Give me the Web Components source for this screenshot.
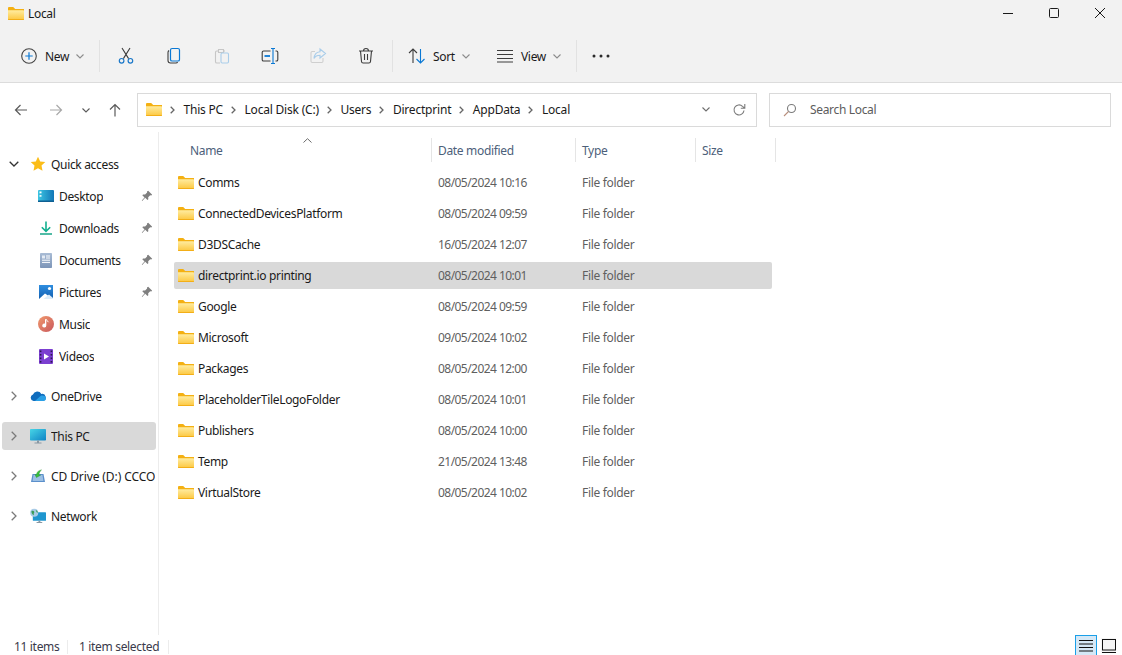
<!DOCTYPE html>
<html lang="en">
<head>
<meta charset="utf-8">
<title>Local</title>
<style>
html, body { margin: 0; height: 100%; background: #fff; overflow: hidden; }
body { font: 12px "Noto Sans", "Open Sans", sans-serif; letter-spacing: -0.33px; color: #1a1a1a; }
</style>
</head>
<body>
<explorer-window>
  <title-bar slot="title" label="Local"></title-bar>
  <tool-bar slot="tools"></tool-bar>
  <address-bar slot="address"></address-bar>
  <nav-pane slot="nav">
    <nav-item chevron="open" icon="star" label="Quick access"></nav-item>
    <nav-item depth="1" icon="desktop" label="Desktop" pin></nav-item>
    <nav-item depth="1" icon="downloads" label="Downloads" pin></nav-item>
    <nav-item depth="1" icon="documents" label="Documents" pin></nav-item>
    <nav-item depth="1" icon="pictures" label="Pictures" pin></nav-item>
    <nav-item depth="1" icon="music" label="Music"></nav-item>
    <nav-item depth="1" icon="videos" label="Videos" last></nav-item>
    <nav-item chevron="closed" icon="onedrive" label="OneDrive" last></nav-item>
    <nav-item chevron="closed" icon="pc" label="This PC" selected last></nav-item>
    <nav-item chevron="closed" icon="cd" label="CD Drive (D:) CCCO" last style="letter-spacing:-0.1px"></nav-item>
    <nav-item chevron="closed" icon="network" label="Network"></nav-item>
  </nav-pane>
  <file-list slot="files">
    <file-row name="Comms" date="08/05/2024 10:16"></file-row>
    <file-row name="ConnectedDevicesPlatform" date="08/05/2024 09:59"></file-row>
    <file-row name="D3DSCache" date="16/05/2024 12:07"></file-row>
    <file-row name="directprint.io printing" date="08/05/2024 10:01" selected></file-row>
    <file-row name="Google" date="08/05/2024 09:59"></file-row>
    <file-row name="Microsoft" date="09/05/2024 10:02"></file-row>
    <file-row name="Packages" date="08/05/2024 12:00"></file-row>
    <file-row name="PlaceholderTileLogoFolder" date="08/05/2024 10:01"></file-row>
    <file-row name="Publishers" date="08/05/2024 10:00"></file-row>
    <file-row name="Temp" date="21/05/2024 13:48"></file-row>
    <file-row name="VirtualStore" date="08/05/2024 10:02"></file-row>
  </file-list>
  <status-bar slot="status"></status-bar>
</explorer-window>

<script>
const ICONS = {
  folder: `<svg viewBox="0 0 16 13" width="16" height="13"><defs><linearGradient id="f" x1="0" y1="0" x2="0" y2="1"><stop offset="0" stop-color="#ffeca0"/><stop offset="1" stop-color="#fcc73f"/></linearGradient></defs>
    <path d="M0 1.2C0 .5.5 0 1.2 0h4l2 2H16v2H0z" fill="#f4b012"/><path d="M0 3.2h15.2c.5 0 .8.3.8.8v8c0 .6-.4 1-1 1H1c-.6 0-1-.4-1-1z" fill="url(#f)"/><path d="M0 12h16c0 .6-.4 1-1 1H1c-.6 0-1-.4-1-1z" fill="#f3ae17"/></svg>`,
  plus: `<svg viewBox="0 0 18 18" width="18" height="18" fill="none"><circle cx="9" cy="9" r="7.3" stroke="#444" stroke-width="1.1"/><path d="M9 5.3v7.4M5.3 9h7.4" stroke="#0a78d4" stroke-width="1.2"/></svg>`,
  cut: `<svg viewBox="0 0 20 20" width="20" height="20" fill="none"><path d="M6 2l6.6 10.6M14 2L7.4 12.6" stroke="#3d3d3d" stroke-width="1.1"/><circle cx="5.6" cy="14.8" r="2.3" stroke="#1b78c9" stroke-width="1.2"/><circle cx="14.4" cy="14.8" r="2.3" stroke="#1b78c9" stroke-width="1.2"/></svg>`,
  copy: `<svg viewBox="0 0 20 20" width="20" height="20" fill="none"><path d="M5 4.500C4.300 5 4 5.500 4 6.500v8c0 1.700 1 2.500 2.500 2.500h5.500c.8 0 1.300-.4 1.600-1" stroke="#3d3d3d" stroke-width="1.100"/><rect x="6.500" y="2.500" width="9" height="12.500" rx="1.600" stroke="#0a78d4" stroke-width="1.200"/></svg>`,
  paste: `<svg viewBox="0 0 20 20" width="20" height="20" fill="none"><path d="M7 5H4.800C4 5 3.500 5.500 3.500 6.300v9.400c0 .8.500 1.300 1.300 1.300H8" stroke="#c6c6c6" stroke-width="1.100"/><path d="M6.500 3.500h5v3h-5zM11.500 5h1.500" stroke="#c6c6c6" stroke-width="1.100"/><rect x="9" y="7" width="7.500" height="10" rx="1.200" stroke="#a9cdea" stroke-width="1.100"/></svg>`,
  rename: `<svg viewBox="0 0 20 20" width="20" height="20" fill="none"><path d="M10.500 5H3.500C2.700 5 2.200 5.500 2.200 6.300v7.400c0 .8.500 1.300 1.300 1.300h7M15.500 5h1c.8 0 1.300.5 1.300 1.300v7.400c0 .8-.5 1.300-1.300 1.300h-1" stroke="#3d3d3d" stroke-width="1.100"/><path d="M4.500 10h5.500" stroke="#0a78d4" stroke-width="1.800"/><path d="M11 2.500h4M11 17.500h4M13 2.500v15" stroke="#0a78d4" stroke-width="1.100"/></svg>`,
  share: `<svg viewBox="0 0 20 20" width="20" height="20" fill="none"><path d="M7 5.500H4.200C3.500 5.500 3 6 3 6.700v8.600c0 .7.500 1.200 1.200 1.200h9.600c.7 0 1.200-.5 1.200-1.200V12" stroke="#cfcfcf" stroke-width="1.100"/><path d="M12 3l5.500 4.500L12 12V9.300c-2.800 0-4.800 1-6 3.200C6.300 9 8 6.200 12 5.800z" stroke="#a9cdea" stroke-width="1.100"/></svg>`,
  trash: `<svg viewBox="0 0 20 20" width="20" height="20" fill="none" stroke="#3d3d3d" stroke-width="1.100"><path d="M3 5h14M7.500 5c0-1.600 1-2.500 2.500-2.500s2.500.9 2.500 2.500M4.500 5l1 10.500c.1 1 .7 1.500 1.600 1.500h5.800c.9 0 1.500-.5 1.600-1.500L15.500 5M8.500 8v6M11.500 8v6"/></svg>`,
  sort: `<svg viewBox="0 0 20 20" width="20" height="20" fill="none" stroke-width="1.100"><path d="M6 17V3M2 7l4-4 4 4" stroke="#3d3d3d"/><path d="M13.500 3v14M9.500 13l4 4 4-4" stroke="#0a78d4"/></svg>`,
  view: `<svg viewBox="0 0 18 18" width="18" height="18" fill="none" stroke="#3d3d3d" stroke-width="1"><path d="M1 3.500h16M1 7.500h16M1 11.500h16M1 15h16"/></svg>`,
  dots: `<svg viewBox="0 0 18 6" width="18" height="6" fill="#2b2b2b"><circle cx="2" cy="3" r="1.500"/><circle cx="9" cy="3" r="1.500"/><circle cx="16" cy="3" r="1.500"/></svg>`,
  back: `<svg viewBox="0 0 14 14" width="14" height="14" fill="none" stroke="#5a5a5a" stroke-width="1.200"><path d="M13 7H1.500M6.500 2l-5 5 5 5"/></svg>`,
  forward: `<svg viewBox="0 0 14 14" width="14" height="14" fill="none" stroke="#a8a8a8" stroke-width="1.200"><path d="M1 7h11.500M7.500 2l5 5-5 5"/></svg>`,
  up: `<svg viewBox="0 0 14 14" width="14" height="14" fill="none" stroke="#5a5a5a" stroke-width="1.200"><path d="M7 13.500V1.500M2 6.500l5-5 5 5"/></svg>`,
  down: `<svg viewBox="0 0 8 5" width="8" height="5" fill="none" stroke="currentColor" stroke-width="1.100"><path d="M.5.500L4 4 7.500.500"/></svg>`,
  right: `<svg viewBox="0 0 5 8" width="5" height="8" fill="none" stroke="currentColor" stroke-width="1.300"><path d="M.7.700L4 4 .7 7.300"/></svg>`,
  navopen: `<svg viewBox="0 0 10 6" width="10" height="6" fill="none" stroke="currentColor" stroke-width="1.300"><path d="M.7.700L5 5 9.300.700"/></svg>`,
  navclosed: `<svg viewBox="0 0 6 10" width="6" height="10" fill="none" stroke="currentColor" stroke-width="1.300"><path d="M.7.700L5 5 .7 9.300"/></svg>`,
  caret: `<svg viewBox="0 0 9 5" width="9" height="5" fill="none" stroke="#6b6b6b" stroke-width="1"><path d="M.5 4.500L4.500.7l4 3.800"/></svg>`,
  refresh: `<svg viewBox="0 0 14 14" width="14" height="14" fill="none" stroke="#7b7b7b" stroke-width="1.100"><path d="M12 7.500A5 5 0 1 1 10.500 3.300L12.500 5M12.800 1v4.200H8.800"/></svg>`,
  search: `<svg viewBox="0 0 14 14" width="14" height="14" fill="none" stroke-width="1.100"><circle cx="8.500" cy="5.500" r="4" stroke="#7b7b7b"/><path d="M5.500 8.500L1 13" stroke="#b98f7c"/></svg>`,
  min: `<svg viewBox="0 0 12 12" width="12" height="12" stroke="#1a1a1a" stroke-width="1"><path d="M1 6.500h10"/></svg>`,
  max: `<svg viewBox="0 0 12 12" width="12" height="12" fill="none" stroke="#1a1a1a" stroke-width="1"><rect x="1.500" y="1.500" width="9" height="9" rx="1"/></svg>`,
  close: `<svg viewBox="0 0 12 12" width="12" height="12" stroke="#1a1a1a" stroke-width="1"><path d="M1 1l10 10M11 1L1 11"/></svg>`,
  pin: `<svg viewBox="0 0 12 12" width="12" height="12" fill="#7f7f7f"><path d="M7.200.800l4 4-1 .7-1-.2-2 2 .1 2-.8.800-2.300-2.300L1.200 11 .8 10.600l2.700-3.100L1.300 5.200l.8-.8 2 .2 2-2-.1-1z"/></svg>`,
  star: `<svg viewBox="0 0 16 16" width="16" height="16"><path d="M8 .800l2.200 4.700 5.100.6-3.800 3.500 1 5.100L8 12.200l-4.500 2.500 1-5.100L.7 6.100l5.100-.6z" fill="#fbbd19"/></svg>`,
  desktop: `<svg viewBox="0 0 16 12" width="16" height="12"><defs><linearGradient id="d" x1="0" y1="0" x2="1" y2="0"><stop offset="0" stop-color="#3cc5e2"/><stop offset="1" stop-color="#1277b8"/></linearGradient></defs><rect width="16" height="12" rx="1" fill="url(#d)"/><rect y="10.500" width="16" height="1.500" fill="#0e5f92"/><rect x="1.500" y="1.500" width="2" height="1.800" fill="#fff"/><rect x="1.500" y="5" width="2" height="1.800" fill="#e2f6fb"/></svg>`,
  downloads: `<svg viewBox="0 0 14 14" width="14" height="14" fill="none" stroke="#12b08f" stroke-width="1.600"><path d="M7 .500v9.500M2.800 6.200L7 10.300l4.200-4.100"/><path d="M1 13h12" stroke="#17a589"/></svg>`,
  documents: `<svg viewBox="0 0 12 15" width="12" height="15"><defs><linearGradient id="o" x1="0" y1="0" x2="0" y2="1"><stop offset="0" stop-color="#a9bcd5"/><stop offset="1" stop-color="#7d95b8"/></linearGradient></defs><rect width="12" height="15" rx=".8" fill="url(#o)"/><path d="M6 3h4M6 5h4M2 7.200h8M2 9.400h8" stroke="#fff" stroke-width="1"/><rect x="2" y="2.500" width="3" height="3" fill="#e4ebf4"/></svg>`,
  pictures: `<svg viewBox="0 0 14 14" width="14" height="14"><defs><linearGradient id="p" x1="0" y1="0" x2="0" y2="1"><stop offset="0" stop-color="#2f8ee0"/><stop offset="1" stop-color="#125fb0"/></linearGradient></defs><rect width="14" height="14" fill="url(#p)"/><path d="M0 14l6-5.500L14 14z" fill="#fff"/><path d="M4.500 14L10 9.500 14 13v1z" fill="#dcecf9"/><circle cx="10.500" cy="3.500" r="1.600" fill="#fff"/></svg>`,
  music: `<svg viewBox="0 0 16 16" width="16" height="16"><defs><linearGradient id="m" x1="0" y1="0" x2="1" y2="1"><stop offset="0" stop-color="#f09a6e"/><stop offset="1" stop-color="#c9575c"/></linearGradient></defs><circle cx="8" cy="8" r="8" fill="url(#m)"/><path d="M8.300 3.200v6.200a2 2 0 1 1-1.300-1.800V3.200z" fill="#fff"/><path d="M8 3.200c.5 1.600 2 1.700 2.600 3" stroke="#fff" stroke-width="1" fill="none"/></svg>`,
  videos: `<svg viewBox="0 0 14 15" width="14" height="15"><rect width="14" height="15" rx="1" fill="#7c3fd1"/><path d="M5 4.500l5 3-5 3z" fill="#fff"/><g fill="#2b1a4f"><rect x=".8" y="1.500" width="1.600" height="1.600"/><rect x=".8" y="5" width="1.600" height="1.600"/><rect x=".8" y="8.500" width="1.600" height="1.600"/><rect x=".8" y="12" width="1.600" height="1.600"/><rect x="11.600" y="1.500" width="1.600" height="1.600"/><rect x="11.600" y="5" width="1.600" height="1.600"/><rect x="11.600" y="8.500" width="1.600" height="1.600"/><rect x="11.600" y="12" width="1.600" height="1.600"/></g></svg>`,
  onedrive: `<svg viewBox="0 0 16 10" width="16" height="10"><path d="M3.500 10A3.300 3.300 0 0 1 3 3.600 4.500 4.500 0 0 1 11.300 3 3.600 3.600 0 0 1 13 10z" fill="#0f6cbd"/><path d="M5 10l5.500-5c1.500-1 5.500-.5 5.500 2.500 0 1.500-1.200 2.500-2.500 2.500z" fill="#2aa0e6"/></svg>`,
  pc: `<svg viewBox="0 0 16 15" width="16" height="15"><defs><linearGradient id="c" x1="0" y1="0" x2="1" y2="1"><stop offset="0" stop-color="#47d5e6"/><stop offset="1" stop-color="#0f83c5"/></linearGradient></defs><rect width="16" height="11.500" rx=".8" fill="url(#c)"/><path d="M7 11.500h2v2H7zM4.500 13.500h7v1h-7z" fill="#8a98a3"/></svg>`,
  cd: `<svg viewBox="0 0 14 14" width="14" height="14"><path d="M1.500 5h11l1.500 8H0z" fill="#5b8fcb"/><path d="M2.500 6h9l.9 6H1.600z" fill="#9cc0e4"/><path d="M5.500 8.500L4 5.500l1.500.4c0-2.600 1.800-4.500 5-5-1.600 1.300-2.500 2.800-2.500 5.400l1.700-.2z" fill="#3cc13b" stroke="#1d8a26" stroke-width=".4"/></svg>`,
  network: `<svg viewBox="0 0 17 16" width="17" height="16"><rect x="3" y="4" width="14" height="9" rx=".6" fill="#1f96cf"/><path d="M9 13h2v1.500H9zM7 14.500h6v1H7z" fill="#8a98a3"/><circle cx="4.500" cy="4.500" r="4.300" fill="#a8cbe6"/><path d="M1.500 3c1.500-1 2.500-.5 3 .5s-1 1.500-.5 3-2.500 0-2.500-3.500zM6 1.500c1 0 2.500 1.500 2.500 3L7 4z" fill="#3a9c58"/></svg>`,
  details: `<svg viewBox="0 0 14 14" width="14" height="14" fill="none" stroke="#111" stroke-width="1"><path d="M0 1.500h14M0 5h14M0 8.500h14M0 12h14"/></svg>`,
  tiles: `<svg viewBox="0 0 14 14" width="14" height="14" fill="none" stroke="#111" stroke-width="1"><rect x=".5" y=".5" width="13" height="10.500"/><path d="M0 13.500h14"/></svg>`
};

class XIcon extends HTMLElement {
  constructor() {
    super();
    this.attachShadow({ mode: 'open' }).innerHTML = `<style>
      :host { display: inline-flex; align-items: center; justify-content: center; flex: none; }
      svg { display: block; }
    </style>${ICONS[this.getAttribute('name')] || ''}`;
  }
}

class ExplorerWindow extends HTMLElement {
  constructor() {
    super();
    this.attachShadow({ mode: 'open' }).innerHTML = `<style>
      :host { display: flex; flex-direction: column; height: 655px; width: 1122px; overflow: hidden; }
      .main { flex: 1; display: flex; min-height: 0; }
    </style>
    <slot name="title"></slot>
    <slot name="tools"></slot>
    <slot name="address"></slot>
    <div class="main"><slot name="nav"></slot><slot name="files"></slot></div>
    <slot name="status"></slot>`;
  }
}

class TitleBar extends HTMLElement {
  constructor() {
    super();
    this.attachShadow({ mode: 'open' }).innerHTML = `<style>
      :host { display: flex; align-items: flex-start; height: 40px; background: #f2f2f2; padding-left: 8px; }
      .name { display: flex; align-items: center; gap: 4px; height: 26px; }
      .ctl { margin-left: auto; display: flex; }
      .ctl x-icon { width: 46px; height: 26px; }
      .ctl x-icon:last-child { width: 45px; }
    </style>
    <div class="name"><x-icon name="folder"></x-icon><span>${this.getAttribute('label')}</span></div>
    <div class="ctl"><x-icon name="min"></x-icon><x-icon name="max"></x-icon><x-icon name="close"></x-icon></div>`;
  }
}

class ToolBtn extends HTMLElement {
  constructor() {
    super();
    const label = this.getAttribute('label');
    this.attachShadow({ mode: 'open' }).innerHTML = `<style>
      :host { display: flex; align-items: center; height: 32px; flex: none; box-sizing: border-box; width: 48px; justify-content: center; }
      :host([label]) { justify-content: flex-start; }
      span { margin-left: var(--gap, 7px); }
      .c { color: #8c8c8c; margin-left: 7px; }
    </style>
    <x-icon name="${this.getAttribute('icon')}"></x-icon>
    ${label ? `<span>${label}</span><x-icon class="c" name="down"></x-icon>` : ''}`;
  }
}

class ToolBar extends HTMLElement {
  constructor() {
    super();
    this.attachShadow({ mode: 'open' }).innerHTML = `<style>
      :host { display: flex; align-items: flex-start; height: 42px; background: #f2f2f2; border-bottom: 1px solid #dcdcdc; padding-left: 10px; }
      .sep { width: 1px; height: 32px; background: #e2e2e2; flex: none; }
      .gap { margin-right: 2px; }
      .gapl { margin-left: 2px; }
    </style>
    <tool-btn icon="plus" label="New" style="width:89px;padding-left:10px"></tool-btn>
    <div class="sep gap"></div>
    <tool-btn icon="cut"></tool-btn>
    <tool-btn icon="copy"></tool-btn>
    <tool-btn icon="paste"></tool-btn>
    <tool-btn icon="rename"></tool-btn>
    <tool-btn icon="share"></tool-btn>
    <tool-btn icon="trash"></tool-btn>
    <div class="sep gapl"></div>
    <tool-btn icon="sort" label="Sort" style="width:89px;padding-left:14px;--gap:6px"></tool-btn>
    <tool-btn icon="view" label="View" style="width:94px;padding-left:14px"></tool-btn>
    <div class="sep"></div>
    <tool-btn icon="dots"></tool-btn>`;
  }
}

class AddressBar extends HTMLElement {
  constructor() {
    super();
    const crumbs = ['This PC', 'Local Disk (C:)', 'Users', 'Directprint', 'AppData', 'Local'];
    this.attachShadow({ mode: 'open' }).innerHTML = `<style>
      :host { display: flex; align-items: center; height: 49px; padding: 10px 0 5px 4px; box-sizing: border-box; }
      .nav { width: 34px; height: 34px; }
      .navf { width: 35px; height: 34px; }
      .navd { width: 26px; height: 34px; color: #5a5a5a; }
      .navu { width: 32px; height: 34px; margin-right: 6px; }
      .box { display: flex; align-items: center; height: 34px; box-sizing: border-box; border: 1px solid #dadada; background: #fff; flex: none; padding-bottom: 1px; }
      .path { width: 620px; padding-left: 8px; letter-spacing: -0.2px; }
      .search { width: 342px; margin-left: 12px; padding-left: 13px; color: #5c5c5c; }
      .search span { margin-left: 13px; }
      .sep { color: #666; margin: 0 8.5px 0 8px; }
      .right { margin-left: auto; display: flex; align-items: center; color: #6e6e6e; }
      .right x-icon:first-child { width: 10px; margin-right: 21px; }
      .right x-icon:last-child { margin-right: 10px; }
    </style>
    <x-icon class="nav" name="back"></x-icon>
    <x-icon class="navf" name="forward"></x-icon>
    <x-icon class="navd" name="down"></x-icon>
    <x-icon class="navu" name="up"></x-icon>
    <div class="box path">
      <x-icon name="folder"></x-icon>
      ${crumbs.map(c => `<x-icon class="sep" name="right"></x-icon><span>${c}</span>`).join('')}
      <div class="right"><x-icon name="down"></x-icon><x-icon name="refresh"></x-icon></div>
    </div>
    <div class="box search"><x-icon name="search"></x-icon><span>Search Local</span></div>`;
  }
}

class NavPane extends HTMLElement {
  constructor() {
    super();
    this.attachShadow({ mode: 'open' }).innerHTML = `<style>
      :host { display: flex; flex-direction: column; width: 158px; flex: none; padding-top: 16px; box-sizing: content-box; border-right: 1px solid #ececec; overflow: hidden; }
      slot { display: contents; }
    </style><slot></slot>`;
  }
}

class NavItem extends HTMLElement {
  constructor() {
    super();
    const depth = this.getAttribute('depth');
    const chev = this.getAttribute('chevron');
    this.attachShadow({ mode: 'open' }).innerHTML = `<style>
      :host { display: flex; align-items: center; height: 28px; flex: none; margin: 2px; border-radius: 3px; white-space: nowrap; overflow: hidden; }
      :host([selected]) { background: #d9d9d9; }
      :host([last]) { margin-bottom: 10px; }
      .chev { width: 24px; flex: none; color: #7a7a7a; }
      .chev.open { color: #333; }
      .ind { width: 36px; flex: none; }
      .ico { width: 16px; margin-left: 4px; }
      .ico.sub { margin-left: 0; }
      .label { margin-left: 5px; overflow: hidden; }
      .pin { margin-left: auto; margin-right: 3px; }
    </style>
    ${depth ? '<div class="ind"></div>' : `<x-icon class="chev ${chev}" name="${chev === 'open' ? 'navopen' : 'navclosed'}"></x-icon>`}
    <x-icon class="ico ${depth ? 'sub' : ''}" name="${this.getAttribute('icon')}"></x-icon>
    <span class="label">${this.getAttribute('label')}</span>
    ${this.hasAttribute('pin') ? '<x-icon class="pin" name="pin"></x-icon>' : ''}`;
  }
}

class FileList extends HTMLElement {
  constructor() {
    super();
    this.attachShadow({ mode: 'open' }).innerHTML = `<style>
      :host { display: block; flex: 1; padding: 6px 0 0 15px; box-sizing: border-box; }
      .head { display: flex; height: 24px; margin-bottom: 7px; color: #4c607a; position: relative; }
      .col { box-sizing: border-box; padding-left: 6px; display: flex; align-items: center; border-left: 1px solid #e5e5e5; }
      .name { width: 257px; padding-left: 16px; border-left: 0; }
      .date { width: 144px; }
      .type { width: 120px; }
      .size { width: 81px; border-right: 1px solid #e5e5e5; }
      .caret { position: absolute; left: 129px; top: 0; }
      .rows { display: flex; flex-direction: column; gap: 4px; }
    </style>
    <div class="head">
      <div class="col name">Name</div><div class="col date">Date modified</div><div class="col type">Type</div><div class="col size">Size</div>
      <x-icon class="caret" name="caret"></x-icon>
    </div>
    <div class="rows"><slot></slot></div>`;
  }
}

class FileRow extends HTMLElement {
  constructor() {
    super();
    this.attachShadow({ mode: 'open' }).innerHTML = `<style>
      :host { display: flex; align-items: center; height: 27px; width: 598px; box-sizing: border-box; padding-left: 4px; border-radius: 2px; white-space: nowrap; }
      :host([selected]) { background: #d9d9d9; }
      .n { width: 240px; margin-left: 4px; color: #1a1a1a; }
      .d { width: 144px; color: #5f5f5f; letter-spacing: -0.55px; }
      .t { color: #5f5f5f; }
    </style>
    <x-icon name="folder"></x-icon>
    <span class="n">${this.getAttribute('name')}</span>
    <span class="d">${this.getAttribute('date')}</span>
    <span class="t">File folder</span>`;
  }
}

class StatusBar extends HTMLElement {
  constructor() {
    super();
    this.attachShadow({ mode: 'open' }).innerHTML = `<style>
      :host { display: flex; align-items: flex-start; height: 20px; padding-left: 14px; color: #3a3a4a; }
      .a { width: 54px; margin-top: 5px; border-right: 1px solid #ececec; line-height: 14px; box-sizing: border-box; }
      .b { width: 89px; margin-top: 5px; padding-left: 11px; box-sizing: content-box; border-right: 1px solid #ececec; line-height: 14px; }
      .views { margin-left: auto; display: flex; align-items: flex-start; height: 20px; margin-right: 6px; }
      .on { width: 22px; height: 20px; box-sizing: border-box; border: 1px solid #1a9fe8; border-bottom: 0; background: #d5e8f6; }
      .off { width: 15px; height: 15px; margin: 3px 0 0 4px; background: #f5f5f5; }
    </style>
    <div class="a">11 items</div>
    <div class="b">1 item selected</div>
    <div class="views"><x-icon class="on" name="details"></x-icon><x-icon class="off" name="tiles"></x-icon></div>`;
  }
}

customElements.define('x-icon', XIcon);
customElements.define('explorer-window', ExplorerWindow);
customElements.define('title-bar', TitleBar);
customElements.define('tool-btn', ToolBtn);
customElements.define('tool-bar', ToolBar);
customElements.define('address-bar', AddressBar);
customElements.define('nav-pane', NavPane);
customElements.define('nav-item', NavItem);
customElements.define('file-list', FileList);
customElements.define('file-row', FileRow);
customElements.define('status-bar', StatusBar);
</script>
</body>
</html>
